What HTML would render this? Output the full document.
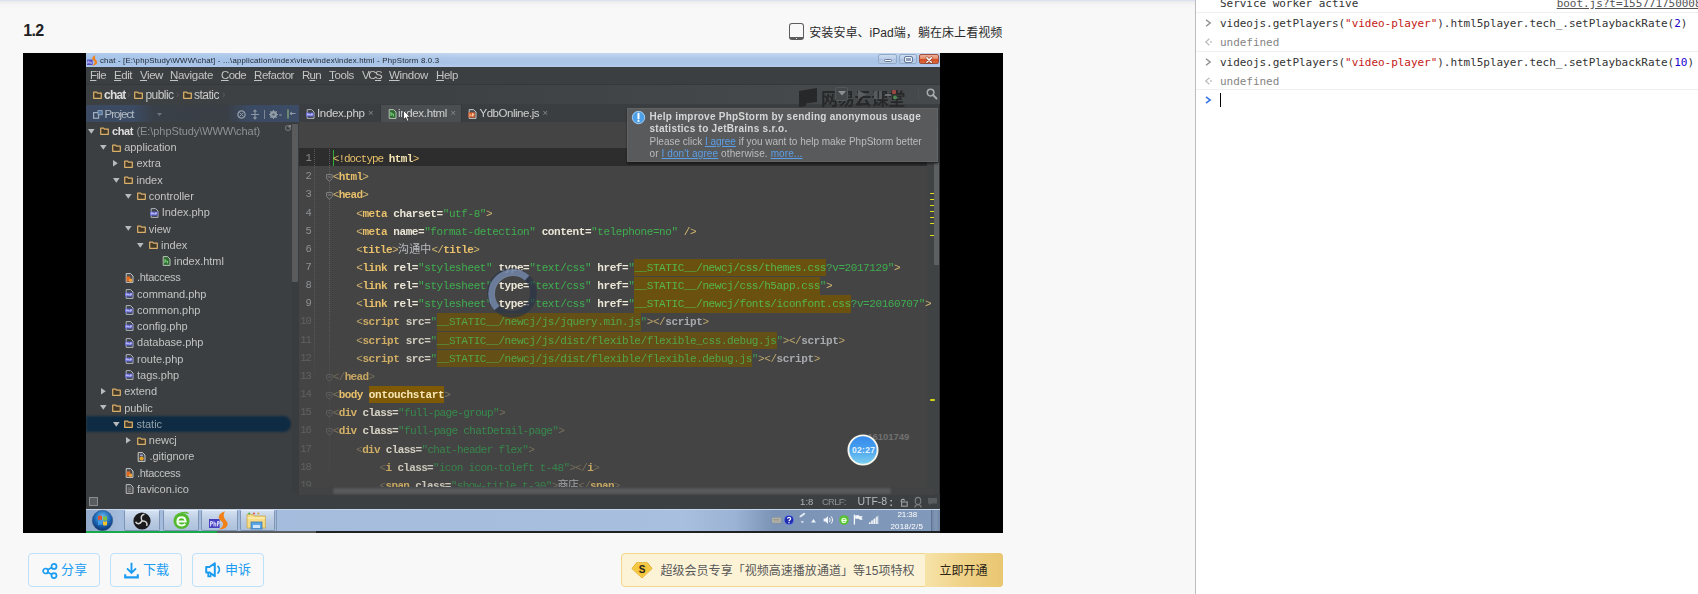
<!DOCTYPE html>
<html lang="zh-CN">
<head>
<meta charset="utf-8">
<title>1.2</title>
<style>
*{box-sizing:border-box;margin:0;padding:0}
html,body{width:1698px;height:594px;overflow:hidden}
body{background:#f8f8f8;position:relative;font-family:"Liberation Sans","Noto Sans CJK SC",sans-serif;color:#222}
.abs{position:absolute}
.t{position:absolute;white-space:pre;display:block}
svg{position:absolute;overflow:visible}
/* ---------- page (left) ---------- */
#page{position:absolute;left:0;top:0;width:1195px;height:594px;background:#f8f8f8;overflow:hidden}
#topline{position:absolute;left:0;top:0;width:1195px;height:8px;background:linear-gradient(#d3deed 0,#dfe6ef 0.9px,#ededee 1.6px,#f1f1f1 3px,#f5f5f5 5px,#f8f8f8 8px)}
#video{position:absolute;left:23px;top:53px;width:980px;height:480px;background:#000;overflow:hidden}
#ide{position:absolute;left:63px;top:0;width:854px;height:480px;background:#3c3f41;overflow:hidden}
#blur{position:absolute;left:0;top:0;width:854px;height:480px;filter:blur(0.45px)}
.btn{position:absolute;top:553px;height:34px;border:1px solid #b9dcf8;border-radius:4px;background:#f8f8f8}
/* ---------- devtools (right) ---------- */
#split{position:absolute;left:1195px;top:0;width:1px;height:594px;background:#bdbdbd}
#dev{position:absolute;left:1196px;top:0;width:502px;height:594px;background:#fff;overflow:hidden;font-family:"DejaVu Sans Mono","Liberation Mono",monospace;font-size:11px;letter-spacing:-0.04px;color:#333;white-space:pre}
#dev .hr{position:absolute;left:0;width:502px;height:1px;background:#efefef}
#dev .ln{position:absolute;left:24px;height:16px;line-height:16px}
#dev .s{color:#c41a16}
#dev .n{color:#1c00cf}
#dev .u{color:#858585}
</style>
</head>
<body>
<div id="page">
  <div id="topline"></div>
<span class="t " id="t79" style="left:23.3px;top:19px;height:24px;line-height:24px;font-size:16px;color:#222;font-family:'Liberation Sans','Noto Sans CJK SC',sans-serif;font-weight:bold;letter-spacing:-0.650px;">1.2</span>
<div class="abs" style="left:789px;top:23px;width:15px;height:17px;background:transparent;border:1.8px solid #5c5c5c;border-bottom-width:3.2px;border-radius:3px"></div>
<div class="abs" style="left:795.6px;top:37.5px;width:1.8px;height:1.8px;background:#fdfdfd;border-radius:1px"></div>
<span class="t " id="t80" style="left:809.3px;top:24px;height:18px;line-height:18px;font-size:12px;color:#2a2a2a;font-family:'Liberation Sans','Noto Sans CJK SC',sans-serif;letter-spacing:0.054px;">安装安卓、iPad端，躺在床上看视频</span>
<div class="abs" style="left:28px;top:553px;width:72px;height:34px;background:#f8f8f8;border:1px solid #bbe1fb;border-radius:4px"></div>
<div class="abs" style="left:110px;top:553px;width:72px;height:34px;background:#f8f8f8;border:1px solid #bbe1fb;border-radius:4px"></div>
<div class="abs" style="left:192px;top:553px;width:71.5px;height:34px;background:#f8f8f8;border:1px solid #bbe1fb;border-radius:4px"></div>
<svg style="left:41.5px;top:562.5px" width="16" height="16" viewBox="0 0 16 16"><g fill="none" stroke="#1b9cf2" stroke-width="1.7"><circle cx="3.6" cy="8" r="2.5"/><circle cx="12" cy="3.4" r="2.5"/><circle cx="12" cy="12.6" r="2.5"/><path d="M5.8 6.8L9.8 4.6M5.8 9.2L9.8 11.4"/></g></svg>
<span class="t " id="t81" style="left:61px;top:560.45px;height:19.5px;line-height:19.5px;font-size:13px;color:#1b9cf2;font-family:'Liberation Sans','Noto Sans CJK SC',sans-serif;letter-spacing:0.242px;">分享</span>
<svg style="left:124px;top:561.5px" width="15" height="17" viewBox="0 0 15 17"><g fill="none" stroke="#1b9cf2" stroke-width="1.9"><path d="M7.5 0.8V10.8M3 6.4L7.5 11L12 6.4"/><path d="M1.2 12.2V15.4H13.8V12.2" stroke-width="2.1"/></g></svg>
<span class="t " id="t82" style="left:143px;top:560.45px;height:19.5px;line-height:19.5px;font-size:13px;color:#1b9cf2;font-family:'Liberation Sans','Noto Sans CJK SC',sans-serif;letter-spacing:-0.008px;">下载</span>
<svg style="left:205px;top:562px" width="17" height="16" viewBox="0 0 17 16"><g fill="none" stroke="#1b9cf2" stroke-width="2" stroke-linejoin="round"><path d="M1.2 5H4.4L9.8 1.2V14.2L4.4 10.4H1.2Z"/><path d="M3.2 10.6V14.4H5.6V11.4" stroke-width="1.7"/><path d="M13 4.4A4.8 4.8 0 0 1 13 11" stroke-linecap="round" stroke-width="1.8"/></g></svg>
<span class="t " id="t83" style="left:225px;top:560.45px;height:19.5px;line-height:19.5px;font-size:13px;color:#1b9cf2;font-family:'Liberation Sans','Noto Sans CJK SC',sans-serif;letter-spacing:-0.008px;">申诉</span>
<div class="abs" style="left:621px;top:553px;width:382px;height:34px;background:#fcf3d7;border:1px solid #f2d689;border-radius:4px"></div>
<div class="abs" style="left:925px;top:553px;width:78px;height:34px;background:linear-gradient(90deg,#f6e3a8,#f0d38a 45%,#e9c670);border-radius:0 4px 4px 0"></div>
<svg style="left:631px;top:561.5px" width="22" height="17" viewBox="0 0 22 17"><path d="M5.6 0.8H16.4L21 6.6L11 16L1 6.6Z" fill="#f4c63c" stroke="#e2a91c" stroke-width="1"/><path d="M5.6 0.8H16.4L21 6.6L11 16L1 6.6Z" fill="none" stroke="#fbe08a" stroke-width=".5" transform="translate(1.1 1) scale(.9)"/></svg>
<span class="t " id="t84" style="left:638.7px;top:562px;height:15px;line-height:15px;font-size:10px;color:#2a2418;font-family:'Liberation Sans','Noto Sans CJK SC',sans-serif;font-weight:bold;letter-spacing:-0.072px;">S</span>
<span class="t " id="t85" style="left:660.5px;top:561.6px;height:18px;line-height:18px;font-size:12px;color:#585858;font-family:'Liberation Sans','Noto Sans CJK SC',sans-serif;letter-spacing:0.029px;">超级会员专享「视频高速播放通道」等15项特权</span>
<span class="t " id="t86" style="left:939.5px;top:561.6px;height:18px;line-height:18px;font-size:12px;color:#2b2414;font-family:'Liberation Sans','Noto Sans CJK SC',sans-serif;letter-spacing:-0.004px;">立即开通</span>
  <div id="video">
    <div id="ide"><div id="blur">
<div class="abs" style="left:0px;top:0px;width:854px;height:14px;background:linear-gradient(90deg,rgba(160,192,232,.55),rgba(185,208,234,0) 45%),linear-gradient(#c4d7f0,#adc7e9 40%,#a8c3e7 70%,#b4cbeb);"></div>
<div class="abs" style="left:0px;top:14px;width:854px;height:17px;background:#3c3f41;"></div>
<div class="abs" style="left:0px;top:31px;width:854px;height:20.5px;background:linear-gradient(90deg,#3d4042 0,#3e4143 40%,#46494b 85%);border-top:1px solid #35383a"></div>
<div class="abs" style="left:0px;top:52px;width:212.5px;height:17.2px;background:linear-gradient(90deg,#3b4a62 0,#3b4b64 22%,#3a4048 32%,#3a3f46 66%,#3b4a63 76%,#3c4c66 100%);"></div>
<div class="abs" style="left:0px;top:69.4px;width:206px;height:371.6px;background:#3c3f41;"></div>
<div class="abs" style="left:206px;top:69.4px;width:6.5px;height:371.6px;background:#3a3d3f;"></div>
<div class="abs" style="left:212.5px;top:51px;width:641.5px;height:18px;background:#3b3e40;"></div>
<div class="abs" style="left:212.5px;top:69px;width:641.5px;height:372px;background:#444444;"></div>
<div class="abs" style="left:212.5px;top:95.2px;width:628.5px;height:17.8px;background:#2d2d2d;"></div>
<div class="abs" style="left:841px;top:69px;width:12px;height:372px;background:#404344;"></div>
<div class="abs" style="left:853px;top:51px;width:1px;height:390px;background:#2f3133;"></div>
<div class="abs" style="left:0px;top:441px;width:854px;height:15px;background:#3c3f41;"></div>
<svg style="left:1px;top:1.5px" width="11" height="11" viewBox="0 0 11 11"><rect x="0" y="4.6" width="5.6" height="5.4" fill="#4d48c0"/><path d="M0.8 9V6.2h1.2v1.4H0.8M3 9V6.2M3 7.4h1.4V9" stroke="#dcdcff" stroke-width=".6" fill="none"/><path d="M8.6 0.2C4.6 1.6 4.4 4.2 6.6 5.6C8.4 6.8 8 9 5.2 10.6C9.6 10.6 11.4 7.8 9.4 5.6C7.8 3.8 7.4 2 8.6 0.2Z" fill="#f2811a"/></svg>
<span class="t " id="t0" style="left:14px;top:2.15px;height:11.7px;line-height:11.7px;font-size:7.8px;color:#1d232b;font-family:'Liberation Sans','Noto Sans CJK SC',sans-serif;letter-spacing:0.202px;">chat - [E:\phpStudy\WWW\chat] - ...\application\index\view\index\index.html - PhpStorm 8.0.3</span>
<div class="abs" style="left:792.2px;top:0.8px;width:19px;height:10.6px;background:linear-gradient(#cddcf1,#bacde8 48%,#abc1e0 52%,#b9cde8);border:1px solid #93a9c8;border-radius:2px"></div>
<div class="abs" style="left:812.8px;top:0.8px;width:18.6px;height:10.6px;background:linear-gradient(#cddcf1,#bacde8 48%,#abc1e0 52%,#b9cde8);border:1px solid #93a9c8;border-radius:2px"></div>
<div class="abs" style="left:833.1px;top:0.8px;width:19.7px;height:10.6px;background:linear-gradient(#eeb09a,#e58c6c 45%,#d44a20 52%,#dc6a3c);border:1px solid #a0503c;border-radius:2px"></div>
<div class="abs" style="left:798.2px;top:6.4px;width:7.8px;height:2.8px;background:#f4f7fb;border:0.7px solid #6a7c98;border-radius:1.4px"></div>
<div class="abs" style="left:819px;top:3.8px;width:6.8px;height:5.6px;background:#8d9fbd;border:1.3px solid #f2f5fa;outline:0.6px solid #66789a;border-radius:1px"></div>
<svg style="left:840px;top:3.6px" width="6.2" height="6.2" viewBox="0 0 6.2 6.2"><path d="M0.9 0.9L5.3 5.3M5.3 0.9L0.9 5.3" stroke="#6b2a1a" stroke-width="2.6" stroke-linecap="round"/><path d="M0.9 0.9L5.3 5.3M5.3 0.9L0.9 5.3" stroke="#fff" stroke-width="1.6" stroke-linecap="round"/></svg>
<span class="t " id="t1" style="left:4px;top:13.675px;height:17.25px;line-height:17.25px;font-size:11.5px;color:#c4c4c4;font-family:'Liberation Sans','Noto Sans CJK SC',sans-serif;letter-spacing:-0.637px;"><u>F</u>ile</span>
<span class="t " id="t2" style="left:28px;top:13.675px;height:17.25px;line-height:17.25px;font-size:11.5px;color:#c4c4c4;font-family:'Liberation Sans','Noto Sans CJK SC',sans-serif;letter-spacing:-0.457px;"><u>E</u>dit</span>
<span class="t " id="t3" style="left:54px;top:13.675px;height:17.25px;line-height:17.25px;font-size:11.5px;color:#c4c4c4;font-family:'Liberation Sans','Noto Sans CJK SC',sans-serif;letter-spacing:-0.434px;"><u>V</u>iew</span>
<span class="t " id="t4" style="left:84px;top:13.675px;height:17.25px;line-height:17.25px;font-size:11.5px;color:#c4c4c4;font-family:'Liberation Sans','Noto Sans CJK SC',sans-serif;letter-spacing:-0.301px;"><u>N</u>avigate</span>
<span class="t " id="t5" style="left:135px;top:13.675px;height:17.25px;line-height:17.25px;font-size:11.5px;color:#c4c4c4;font-family:'Liberation Sans','Noto Sans CJK SC',sans-serif;letter-spacing:-0.625px;"><u>C</u>ode</span>
<span class="t " id="t6" style="left:168px;top:13.675px;height:17.25px;line-height:17.25px;font-size:11.5px;color:#c4c4c4;font-family:'Liberation Sans','Noto Sans CJK SC',sans-serif;letter-spacing:-0.436px;"><u>R</u>efactor</span>
<span class="t " id="t7" style="left:216px;top:13.675px;height:17.25px;line-height:17.25px;font-size:11.5px;color:#c4c4c4;font-family:'Liberation Sans','Noto Sans CJK SC',sans-serif;letter-spacing:-0.708px;">R<u>u</u>n</span>
<span class="t " id="t8" style="left:243px;top:13.675px;height:17.25px;line-height:17.25px;font-size:11.5px;color:#c4c4c4;font-family:'Liberation Sans','Noto Sans CJK SC',sans-serif;letter-spacing:-0.372px;"><u>T</u>ools</span>
<span class="t " id="t9" style="left:276px;top:13.675px;height:17.25px;line-height:17.25px;font-size:11.5px;color:#c4c4c4;font-family:'Liberation Sans','Noto Sans CJK SC',sans-serif;letter-spacing:-1.500px;">VC<u>S</u></span>
<span class="t " id="t10" style="left:303px;top:13.675px;height:17.25px;line-height:17.25px;font-size:11.5px;color:#c4c4c4;font-family:'Liberation Sans','Noto Sans CJK SC',sans-serif;letter-spacing:-0.320px;"><u>W</u>indow</span>
<span class="t " id="t11" style="left:350px;top:13.675px;height:17.25px;line-height:17.25px;font-size:11.5px;color:#c4c4c4;font-family:'Liberation Sans','Noto Sans CJK SC',sans-serif;letter-spacing:-0.418px;"><u>H</u>elp</span>
<svg style="left:6.5px;top:38px" width="9" height="8" viewBox="0 0 9 8"><path d="M0.7 1.0H3.6L4.4 2.1H8.3V7.3H0.7Z" fill="#42392a" stroke="#d9b06a" stroke-width="1.25" stroke-linejoin="round"/></svg>
<span class="t " id="t12" style="left:18px;top:32.8px;height:18px;line-height:18px;font-size:12px;color:#dcdcdc;font-family:'Liberation Sans','Noto Sans CJK SC',sans-serif;font-weight:bold;letter-spacing:-0.797px;">chat</span>
<span class="t " id="t13" style="left:41px;top:34.3px;height:15px;line-height:15px;font-size:10px;color:#5a5d60;font-family:'Liberation Sans','Noto Sans CJK SC',sans-serif;letter-spacing:0.656px;">›</span>
<svg style="left:48px;top:38px" width="9" height="8" viewBox="0 0 9 8"><path d="M0.7 1.0H3.6L4.4 2.1H8.3V7.3H0.7Z" fill="#42392a" stroke="#d9b06a" stroke-width="1.25" stroke-linejoin="round"/></svg>
<span class="t " id="t14" style="left:59.5px;top:32.8px;height:18px;line-height:18px;font-size:12px;color:#c8c8c8;font-family:'Liberation Sans','Noto Sans CJK SC',sans-serif;letter-spacing:-0.560px;">public</span>
<span class="t " id="t15" style="left:90px;top:34.3px;height:15px;line-height:15px;font-size:10px;color:#5a5d60;font-family:'Liberation Sans','Noto Sans CJK SC',sans-serif;letter-spacing:0.656px;">›</span>
<svg style="left:97px;top:38px" width="9" height="8" viewBox="0 0 9 8"><path d="M0.7 1.0H3.6L4.4 2.1H8.3V7.3H0.7Z" fill="#42392a" stroke="#d9b06a" stroke-width="1.25" stroke-linejoin="round"/></svg>
<span class="t " id="t16" style="left:108px;top:32.8px;height:18px;line-height:18px;font-size:12px;color:#c8c8c8;font-family:'Liberation Sans','Noto Sans CJK SC',sans-serif;letter-spacing:-0.503px;">static</span>
<span class="t " id="t17" style="left:136px;top:34.3px;height:15px;line-height:15px;font-size:10px;color:#5a5d60;font-family:'Liberation Sans','Noto Sans CJK SC',sans-serif;letter-spacing:0.656px;">›</span>
<svg style="left:711px;top:35px" width="22" height="20" viewBox="0 0 22 20"><path d="M2 3L20 0V14L9 15.5V18L2 19Z" fill="#262829"/></svg>
<span class="t " id="t18" style="left:735px;top:33.55px;height:25.5px;line-height:25.5px;font-size:17px;color:#262829;font-family:'Liberation Sans','Noto Sans CJK SC',sans-serif;font-weight:bold;letter-spacing:-0.200px;">网易云课堂</span>
<svg style="left:840px;top:35px" width="12" height="12" viewBox="0 0 12 12"><circle cx="4.6" cy="4.6" r="3.3" fill="none" stroke="#a9abad" stroke-width="1.5"/><path d="M7 7L10.5 10.5" stroke="#a9abad" stroke-width="1.8" stroke-linecap="round"/></svg>
<div class="abs" style="left:831.5px;top:34px;width:1px;height:14px;background:#4b4e50;"></div>
<div class="abs" style="left:749px;top:34px;width:13px;height:14px;background:#45484a;border:1px solid #55585a;border-radius:2px"></div>
<svg style="left:752px;top:38px" width="8" height="5" viewBox="0 0 8 5"><path d="M0 0H8L4 4.5Z" fill="#8d9092"/></svg>
<svg style="left:772px;top:36px" width="40" height="12" viewBox="0 0 40 12"><path d="M0 1L8 5.5L0 10Z" fill="#5b5e60"/><path d="M16 2h3v8h-3zM21 2h3v8h-3z" fill="#585b5d"/><circle cx="36" cy="3" r="2.2" fill="#9a4a42"/><circle cx="37" cy="8.5" r="2" fill="#4f8a55"/><path d="M27 6h6" stroke="#7d8082" stroke-width="1.5"/></svg>
<svg style="left:7px;top:56.5px" width="10" height="9" viewBox="0 0 10 9"><rect x="0.6" y="2.6" width="5" height="5.6" fill="none" stroke="#9fb0c4" stroke-width="1.2"/><rect x="5" y="0.6" width="4.2" height="4.2" fill="#51749c" stroke="#9fb0c4" stroke-width="0.8"/></svg>
<span class="t " id="t19" style="left:18.5px;top:52.675px;height:17.25px;line-height:17.25px;font-size:11.5px;color:#b4bcc6;font-family:'Liberation Sans','Noto Sans CJK SC',sans-serif;letter-spacing:-0.971px;">Project</span>
<svg style="left:71px;top:59.5px" width="6" height="4" viewBox="0 0 6 4"><path d="M0 0H5L2.5 3Z" fill="#6b7684"/></svg>
<svg style="left:150.5px;top:56.5px" width="9" height="9" viewBox="0 0 9 9"><circle cx="4.5" cy="4.5" r="3.6" fill="none" stroke="#929ca8" stroke-width="1.3"/><path d="M2.5 2.5l4 4M6.5 2.5l-4 4" stroke="#929ca8" stroke-width="1"/></svg>
<svg style="left:164.5px;top:56.5px" width="8" height="9" viewBox="0 0 8 9"><path d="M4 0V9M0 4.5H8M2.5 1.6L4 0L5.5 1.6M2.5 7.4L4 9L5.5 7.4" fill="none" stroke="#8e98a4" stroke-width="1.1"/></svg>
<div class="abs" style="left:177.5px;top:56.5px;width:1px;height:9px;background:#7d8793;"></div>
<svg style="left:182.5px;top:56.5px" width="13" height="9" viewBox="0 0 13 9"><circle cx="4.5" cy="4.5" r="2.5" fill="none" stroke="#929ca8" stroke-width="2"/><path d="M4.5 0v9M0 4.5h9M1.3 1.3l6.4 6.4M7.7 1.3L1.3 7.7" stroke="#929ca8" stroke-width="1.1"/><circle cx="4.5" cy="4.5" r="1.1" fill="#3b4b64"/><path d="M10.3 5h2.4" stroke="#929ca8" stroke-width="1.1"/></svg>
<svg style="left:200.5px;top:56px" width="9" height="10" viewBox="0 0 9 10"><path d="M1 0.5V9.5" stroke="#86a878" stroke-width="1.3"/><path d="M3 4.5H8.5M3 4.5L5 3M3 4.5L5 6" stroke="#929ca8" stroke-width="1" fill="none"/></svg>
<div class="abs" style="left:0px;top:363px;width:205px;height:15.5px;background:#0e2b43;border-radius:0 8px 8px 0;filter:blur(0.9px)"></div>
<svg style="left:2px;top:75.8px" width="7" height="5" viewBox="0 0 7 5"><path d="M0 0H6.6L3.3 4.8Z" fill="#b8babc"/></svg>
<svg style="left:13.8px;top:74.4px" width="9" height="8" viewBox="0 0 9 8"><path d="M0.7 1.0H3.6L4.4 2.1H8.3V7.3H0.7Z" fill="#42392a" stroke="#d9b06a" stroke-width="1.25" stroke-linejoin="round"/></svg>
<span class="t " id="t20" style="left:25.9px;top:69.95px;height:16.5px;line-height:16.5px;font-size:11px;color:#dedede;font-family:'Liberation Sans','Noto Sans CJK SC',sans-serif;font-weight:bold;letter-spacing:-0.331px;">chat</span>
<span class="t " id="t21" style="left:50.5px;top:69.95px;height:16.5px;line-height:16.5px;font-size:11px;color:#8f9193;font-family:'Liberation Sans','Noto Sans CJK SC',sans-serif;letter-spacing:-0.073px;">(E:\phpStudy\WWW\chat)</span>
<svg style="left:14.3px;top:92.07px" width="7" height="5" viewBox="0 0 7 5"><path d="M0 0H6.6L3.3 4.8Z" fill="#b8babc"/></svg>
<svg style="left:26.1px;top:90.67px" width="9" height="8" viewBox="0 0 9 8"><path d="M0.7 1.0H3.6L4.4 2.1H8.3V7.3H0.7Z" fill="#42392a" stroke="#d9b06a" stroke-width="1.25" stroke-linejoin="round"/></svg>
<span class="t " id="t22" style="left:38.2px;top:86.22px;height:16.5px;line-height:16.5px;font-size:11px;color:#c3c3c3;font-family:'Liberation Sans','Noto Sans CJK SC',sans-serif;letter-spacing:-0.024px;">application</span>
<svg style="left:27.4px;top:107.44px" width="5" height="7" viewBox="0 0 5 7"><path d="M0 0V6.6L4.8 3.3Z" fill="#b8babc"/></svg>
<svg style="left:38.4px;top:106.94px" width="9" height="8" viewBox="0 0 9 8"><path d="M0.7 1.0H3.6L4.4 2.1H8.3V7.3H0.7Z" fill="#42392a" stroke="#d9b06a" stroke-width="1.25" stroke-linejoin="round"/></svg>
<span class="t " id="t23" style="left:50.5px;top:102.49px;height:16.5px;line-height:16.5px;font-size:11px;color:#c3c3c3;font-family:'Liberation Sans','Noto Sans CJK SC',sans-serif;letter-spacing:-0.028px;">extra</span>
<svg style="left:26.6px;top:124.61px" width="7" height="5" viewBox="0 0 7 5"><path d="M0 0H6.6L3.3 4.8Z" fill="#b8babc"/></svg>
<svg style="left:38.4px;top:123.21px" width="9" height="8" viewBox="0 0 9 8"><path d="M0.7 1.0H3.6L4.4 2.1H8.3V7.3H0.7Z" fill="#42392a" stroke="#d9b06a" stroke-width="1.25" stroke-linejoin="round"/></svg>
<span class="t " id="t24" style="left:50.5px;top:118.76px;height:16.5px;line-height:16.5px;font-size:11px;color:#c3c3c3;font-family:'Liberation Sans','Noto Sans CJK SC',sans-serif;letter-spacing:-0.027px;">index</span>
<svg style="left:38.9px;top:140.88px" width="7" height="5" viewBox="0 0 7 5"><path d="M0 0H6.6L3.3 4.8Z" fill="#b8babc"/></svg>
<svg style="left:50.7px;top:139.48px" width="9" height="8" viewBox="0 0 9 8"><path d="M0.7 1.0H3.6L4.4 2.1H8.3V7.3H0.7Z" fill="#42392a" stroke="#d9b06a" stroke-width="1.25" stroke-linejoin="round"/></svg>
<span class="t " id="t25" style="left:62.8px;top:135.03px;height:16.5px;line-height:16.5px;font-size:11px;color:#c3c3c3;font-family:'Liberation Sans','Noto Sans CJK SC',sans-serif;letter-spacing:-0.024px;">controller</span>
<svg style="left:63.6px;top:154.55px" width="9" height="10" viewBox="0 0 9 10"><path d="M1.2 0.6H5.6L8 3V9.4H1.2Z" fill="#3f4345" stroke="#aeb4bd" stroke-width="1"/><rect x="0" y="3.6" width="7.6" height="4" fill="#5b5fd0"/><path d="M1.2 6.6V4.6M3.2 4.6v2M5.4 4.6v2M1.2 4.8h1.2v1H1.2M5.4 4.8h1.2v1H5.4M3.2 5.6h1.2v1" stroke="#e8e8ff" stroke-width="0.6" fill="none"/></svg>
<span class="t " id="t26" style="left:75.7px;top:151.3px;height:16.5px;line-height:16.5px;font-size:11px;color:#c3c3c3;font-family:'Liberation Sans','Noto Sans CJK SC',sans-serif;letter-spacing:-0.028px;">Index.php</span>
<svg style="left:38.9px;top:173.42px" width="7" height="5" viewBox="0 0 7 5"><path d="M0 0H6.6L3.3 4.8Z" fill="#b8babc"/></svg>
<svg style="left:50.7px;top:172.02px" width="9" height="8" viewBox="0 0 9 8"><path d="M0.7 1.0H3.6L4.4 2.1H8.3V7.3H0.7Z" fill="#42392a" stroke="#d9b06a" stroke-width="1.25" stroke-linejoin="round"/></svg>
<span class="t " id="t27" style="left:62.8px;top:167.57px;height:16.5px;line-height:16.5px;font-size:11px;color:#c3c3c3;font-family:'Liberation Sans','Noto Sans CJK SC',sans-serif;letter-spacing:-0.030px;">view</span>
<svg style="left:51.2px;top:189.69px" width="7" height="5" viewBox="0 0 7 5"><path d="M0 0H6.6L3.3 4.8Z" fill="#b8babc"/></svg>
<svg style="left:63px;top:188.29px" width="9" height="8" viewBox="0 0 9 8"><path d="M0.7 1.0H3.6L4.4 2.1H8.3V7.3H0.7Z" fill="#42392a" stroke="#d9b06a" stroke-width="1.25" stroke-linejoin="round"/></svg>
<span class="t " id="t28" style="left:75.1px;top:183.84px;height:16.5px;line-height:16.5px;font-size:11px;color:#c3c3c3;font-family:'Liberation Sans','Noto Sans CJK SC',sans-serif;letter-spacing:-0.027px;">index</span>
<svg style="left:75.9px;top:203.36px" width="9" height="10" viewBox="0 0 9 10"><path d="M1.2 0.6H5.6L8 3V9.4H1.2Z" fill="#2f6a32" stroke="#b9c2b9" stroke-width="1"/><path d="M3 3v4M3 5h2.4M5.4 5v2.4" stroke="#7fd77f" stroke-width="1" fill="none"/></svg>
<span class="t " id="t29" style="left:88px;top:200.11px;height:16.5px;line-height:16.5px;font-size:11px;color:#c3c3c3;font-family:'Liberation Sans','Noto Sans CJK SC',sans-serif;letter-spacing:-0.026px;">index.html</span>
<svg style="left:39px;top:219.63px" width="9" height="10" viewBox="0 0 9 10"><path d="M1.2 0.6H5.6L8 3V9.4H1.2Z" fill="#4a4d50" stroke="#c8c8c8" stroke-width="1"/><rect x="1.6" y="3.4" width="3.6" height="5" fill="#e0691e"/><circle cx="5.6" cy="7.3" r="1.7" fill="#f2a23a"/></svg>
<span class="t " id="t30" style="left:51.1px;top:216.38px;height:16.5px;line-height:16.5px;font-size:11px;color:#c3c3c3;font-family:'Liberation Sans','Noto Sans CJK SC',sans-serif;letter-spacing:-0.362px;">.htaccess</span>
<svg style="left:39px;top:235.9px" width="9" height="10" viewBox="0 0 9 10"><path d="M1.2 0.6H5.6L8 3V9.4H1.2Z" fill="#3f4345" stroke="#aeb4bd" stroke-width="1"/><rect x="0" y="3.6" width="7.6" height="4" fill="#5b5fd0"/><path d="M1.2 6.6V4.6M3.2 4.6v2M5.4 4.6v2M1.2 4.8h1.2v1H1.2M5.4 4.8h1.2v1H5.4M3.2 5.6h1.2v1" stroke="#e8e8ff" stroke-width="0.6" fill="none"/></svg>
<span class="t " id="t31" style="left:51.1px;top:232.65px;height:16.5px;line-height:16.5px;font-size:11px;color:#c3c3c3;font-family:'Liberation Sans','Noto Sans CJK SC',sans-serif;letter-spacing:-0.033px;">command.php</span>
<svg style="left:39px;top:252.17px" width="9" height="10" viewBox="0 0 9 10"><path d="M1.2 0.6H5.6L8 3V9.4H1.2Z" fill="#3f4345" stroke="#aeb4bd" stroke-width="1"/><rect x="0" y="3.6" width="7.6" height="4" fill="#5b5fd0"/><path d="M1.2 6.6V4.6M3.2 4.6v2M5.4 4.6v2M1.2 4.8h1.2v1H1.2M5.4 4.8h1.2v1H5.4M3.2 5.6h1.2v1" stroke="#e8e8ff" stroke-width="0.6" fill="none"/></svg>
<span class="t " id="t32" style="left:51.1px;top:248.92px;height:16.5px;line-height:16.5px;font-size:11px;color:#c3c3c3;font-family:'Liberation Sans','Noto Sans CJK SC',sans-serif;letter-spacing:-0.033px;">common.php</span>
<svg style="left:39px;top:268.44px" width="9" height="10" viewBox="0 0 9 10"><path d="M1.2 0.6H5.6L8 3V9.4H1.2Z" fill="#3f4345" stroke="#aeb4bd" stroke-width="1"/><rect x="0" y="3.6" width="7.6" height="4" fill="#5b5fd0"/><path d="M1.2 6.6V4.6M3.2 4.6v2M5.4 4.6v2M1.2 4.8h1.2v1H1.2M5.4 4.8h1.2v1H5.4M3.2 5.6h1.2v1" stroke="#e8e8ff" stroke-width="0.6" fill="none"/></svg>
<span class="t " id="t33" style="left:51.1px;top:265.19px;height:16.5px;line-height:16.5px;font-size:11px;color:#c3c3c3;font-family:'Liberation Sans','Noto Sans CJK SC',sans-serif;letter-spacing:-0.026px;">config.php</span>
<svg style="left:39px;top:284.71px" width="9" height="10" viewBox="0 0 9 10"><path d="M1.2 0.6H5.6L8 3V9.4H1.2Z" fill="#3f4345" stroke="#aeb4bd" stroke-width="1"/><rect x="0" y="3.6" width="7.6" height="4" fill="#5b5fd0"/><path d="M1.2 6.6V4.6M3.2 4.6v2M5.4 4.6v2M1.2 4.8h1.2v1H1.2M5.4 4.8h1.2v1H5.4M3.2 5.6h1.2v1" stroke="#e8e8ff" stroke-width="0.6" fill="none"/></svg>
<span class="t " id="t34" style="left:51.1px;top:281.46px;height:16.5px;line-height:16.5px;font-size:11px;color:#c3c3c3;font-family:'Liberation Sans','Noto Sans CJK SC',sans-serif;letter-spacing:-0.028px;">database.php</span>
<svg style="left:39px;top:300.98px" width="9" height="10" viewBox="0 0 9 10"><path d="M1.2 0.6H5.6L8 3V9.4H1.2Z" fill="#3f4345" stroke="#aeb4bd" stroke-width="1"/><rect x="0" y="3.6" width="7.6" height="4" fill="#5b5fd0"/><path d="M1.2 6.6V4.6M3.2 4.6v2M5.4 4.6v2M1.2 4.8h1.2v1H1.2M5.4 4.8h1.2v1H5.4M3.2 5.6h1.2v1" stroke="#e8e8ff" stroke-width="0.6" fill="none"/></svg>
<span class="t " id="t35" style="left:51.1px;top:297.73px;height:16.5px;line-height:16.5px;font-size:11px;color:#c3c3c3;font-family:'Liberation Sans','Noto Sans CJK SC',sans-serif;letter-spacing:-0.027px;">route.php</span>
<svg style="left:39px;top:317.25px" width="9" height="10" viewBox="0 0 9 10"><path d="M1.2 0.6H5.6L8 3V9.4H1.2Z" fill="#3f4345" stroke="#aeb4bd" stroke-width="1"/><rect x="0" y="3.6" width="7.6" height="4" fill="#5b5fd0"/><path d="M1.2 6.6V4.6M3.2 4.6v2M5.4 4.6v2M1.2 4.8h1.2v1H1.2M5.4 4.8h1.2v1H5.4M3.2 5.6h1.2v1" stroke="#e8e8ff" stroke-width="0.6" fill="none"/></svg>
<span class="t " id="t36" style="left:51.1px;top:314px;height:16.5px;line-height:16.5px;font-size:11px;color:#c3c3c3;font-family:'Liberation Sans','Noto Sans CJK SC',sans-serif;letter-spacing:-0.027px;">tags.php</span>
<svg style="left:15.1px;top:335.22px" width="5" height="7" viewBox="0 0 5 7"><path d="M0 0V6.6L4.8 3.3Z" fill="#b8babc"/></svg>
<svg style="left:26.1px;top:334.72px" width="9" height="8" viewBox="0 0 9 8"><path d="M0.7 1.0H3.6L4.4 2.1H8.3V7.3H0.7Z" fill="#42392a" stroke="#d9b06a" stroke-width="1.25" stroke-linejoin="round"/></svg>
<span class="t " id="t37" style="left:38.2px;top:330.27px;height:16.5px;line-height:16.5px;font-size:11px;color:#c3c3c3;font-family:'Liberation Sans','Noto Sans CJK SC',sans-serif;letter-spacing:-0.029px;">extend</span>
<svg style="left:14.3px;top:352.39px" width="7" height="5" viewBox="0 0 7 5"><path d="M0 0H6.6L3.3 4.8Z" fill="#b8babc"/></svg>
<svg style="left:26.1px;top:350.99px" width="9" height="8" viewBox="0 0 9 8"><path d="M0.7 1.0H3.6L4.4 2.1H8.3V7.3H0.7Z" fill="#42392a" stroke="#d9b06a" stroke-width="1.25" stroke-linejoin="round"/></svg>
<span class="t " id="t38" style="left:38.2px;top:346.54px;height:16.5px;line-height:16.5px;font-size:11px;color:#c3c3c3;font-family:'Liberation Sans','Noto Sans CJK SC',sans-serif;letter-spacing:-0.026px;">public</span>
<svg style="left:26.6px;top:368.66px" width="7" height="5" viewBox="0 0 7 5"><path d="M0 0H6.6L3.3 4.8Z" fill="#b8babc"/></svg>
<svg style="left:38.4px;top:367.26px" width="9" height="8" viewBox="0 0 9 8"><path d="M0.7 1.0H3.6L4.4 2.1H8.3V7.3H0.7Z" fill="#42392a" stroke="#d9b06a" stroke-width="1.25" stroke-linejoin="round"/></svg>
<span class="t " id="t39" style="left:50.5px;top:362.81px;height:16.5px;line-height:16.5px;font-size:11px;color:#93a0aa;font-family:'Liberation Sans','Noto Sans CJK SC',sans-serif;letter-spacing:-0.024px;filter:blur(0.75px);">static</span>
<svg style="left:39.7px;top:384.03px" width="5" height="7" viewBox="0 0 5 7"><path d="M0 0V6.6L4.8 3.3Z" fill="#b8babc"/></svg>
<svg style="left:50.7px;top:383.53px" width="9" height="8" viewBox="0 0 9 8"><path d="M0.7 1.0H3.6L4.4 2.1H8.3V7.3H0.7Z" fill="#42392a" stroke="#d9b06a" stroke-width="1.25" stroke-linejoin="round"/></svg>
<span class="t " id="t40" style="left:62.8px;top:379.08px;height:16.5px;line-height:16.5px;font-size:11px;color:#c3c3c3;font-family:'Liberation Sans','Noto Sans CJK SC',sans-serif;letter-spacing:-0.029px;filter:blur(0.75px);">newcj</span>
<svg style="left:51.3px;top:398.6px" width="9" height="10" viewBox="0 0 9 10"><path d="M1.2 0.6H5.6L8 3V9.4H1.2Z" fill="#4a4d50" stroke="#c8c8c8" stroke-width="1"/><circle cx="4.6" cy="6.4" r="2" fill="#e8a020"/><path d="M3 3.2h3" stroke="#b5c6ff" stroke-width="1"/></svg>
<span class="t " id="t41" style="left:63.4px;top:395.35px;height:16.5px;line-height:16.5px;font-size:11px;color:#c3c3c3;font-family:'Liberation Sans','Noto Sans CJK SC',sans-serif;letter-spacing:-0.024px;filter:blur(0.75px);">.gitignore</span>
<svg style="left:39px;top:414.87px" width="9" height="10" viewBox="0 0 9 10"><path d="M1.2 0.6H5.6L8 3V9.4H1.2Z" fill="#4a4d50" stroke="#c8c8c8" stroke-width="1"/><rect x="1.6" y="3.4" width="3.6" height="5" fill="#e0691e"/><circle cx="5.6" cy="7.3" r="1.7" fill="#f2a23a"/></svg>
<span class="t " id="t42" style="left:51.1px;top:411.62px;height:16.5px;line-height:16.5px;font-size:11px;color:#c3c3c3;font-family:'Liberation Sans','Noto Sans CJK SC',sans-serif;letter-spacing:-0.362px;filter:blur(0.75px);">.htaccess</span>
<svg style="left:39px;top:431.14px" width="9" height="10" viewBox="0 0 9 10"><path d="M1.2 0.6H5.6L8 3V9.4H1.2Z" fill="#4a4d50" stroke="#bcbcbc" stroke-width="1"/><path d="M2.8 4h3.4M2.8 5.7h3.4M2.8 7.4h3.4" stroke="#8e8e8e" stroke-width="0.8"/></svg>
<span class="t " id="t43" style="left:51.1px;top:427.89px;height:16.5px;line-height:16.5px;font-size:11px;color:#c3c3c3;font-family:'Liberation Sans','Noto Sans CJK SC',sans-serif;letter-spacing:-0.025px;filter:blur(0.75px);">favicon.ico</span>
<div class="abs" style="left:206px;top:70.5px;width:6px;height:158.5px;background:#595b5d;border-radius:1px"></div>
<svg style="left:198.5px;top:71.5px" width="6" height="6" viewBox="0 0 6 6"><path d="M3 0.5A2.5 2.5 0 1 0 5.5 3" fill="none" stroke="#6f7274" stroke-width="1.2"/><rect x="3.4" y="0" width="2.6" height="2.6" fill="#85888a"/></svg>
<div class="abs" style="left:3px;top:444px;width:8.5px;height:8.5px;background:#595c5e;border:1.2px solid #8a8d8f"></div>
<div class="abs" style="left:293.5px;top:51.5px;width:82px;height:17.5px;background:#4b4e50;border-left:1px solid #353739;border-right:1px solid #353739"></div>
<svg style="left:220px;top:55.5px" width="9" height="10" viewBox="0 0 9 10"><path d="M1.2 0.6H5.6L8 3V9.4H1.2Z" fill="#3f4345" stroke="#aeb4bd" stroke-width="1"/><rect x="0" y="3.6" width="7.6" height="4" fill="#5b5fd0"/><path d="M1.2 6.6V4.6M3.2 4.6v2M5.4 4.6v2M1.2 4.8h1.2v1H1.2M5.4 4.8h1.2v1H5.4M3.2 5.6h1.2v1" stroke="#e8e8ff" stroke-width="0.6" fill="none"/></svg>
<span class="t " id="t44" style="left:231px;top:51.775px;height:17.25px;line-height:17.25px;font-size:11.5px;color:#d0d0d0;font-family:'Liberation Sans','Noto Sans CJK SC',sans-serif;letter-spacing:-0.335px;">Index.php</span>
<span class="t " id="t45" style="left:282px;top:53.475px;height:14.25px;line-height:14.25px;font-size:9.5px;color:#888b8d;font-family:'Liberation Sans','Noto Sans CJK SC',sans-serif;letter-spacing:-0.562px;">×</span>
<svg style="left:302px;top:55.5px" width="9" height="10" viewBox="0 0 9 10"><path d="M1.2 0.6H5.6L8 3V9.4H1.2Z" fill="#2f6a32" stroke="#b9c2b9" stroke-width="1"/><path d="M3 3v4M3 5h2.4M5.4 5v2.4" stroke="#7fd77f" stroke-width="1" fill="none"/></svg>
<span class="t " id="t46" style="left:312px;top:51.775px;height:17.25px;line-height:17.25px;font-size:11.5px;color:#d0d0d0;font-family:'Liberation Sans','Noto Sans CJK SC',sans-serif;letter-spacing:-0.342px;">index.html</span>
<span class="t " id="t47" style="left:364.5px;top:53.475px;height:14.25px;line-height:14.25px;font-size:9.5px;color:#888b8d;font-family:'Liberation Sans','Noto Sans CJK SC',sans-serif;letter-spacing:-0.562px;">×</span>
<svg style="left:381.5px;top:55.5px" width="9" height="10" viewBox="0 0 9 10"><path d="M1.2 0.6H5.6L8 3V9.4H1.2Z" fill="#4a4d50" stroke="#c8c8c8" stroke-width="1"/><rect x="0.4" y="3.4" width="6.4" height="5" fill="#d8622a"/><path d="M2 5v2.4M4 4.8h1.4v1H4v1h1.4" stroke="#ffe" stroke-width=".7" fill="none"/></svg>
<span class="t " id="t48" style="left:393.5px;top:51.775px;height:17.25px;line-height:17.25px;font-size:11.5px;color:#d0d0d0;font-family:'Liberation Sans','Noto Sans CJK SC',sans-serif;letter-spacing:-0.477px;">YdbOnline.js</span>
<span class="t " id="t49" style="left:456.5px;top:53.475px;height:14.25px;line-height:14.25px;font-size:9.5px;color:#888b8d;font-family:'Liberation Sans','Noto Sans CJK SC',sans-serif;letter-spacing:-0.562px;">×</span>
<svg style="left:316.5px;top:56.5px" width="8" height="12" viewBox="0 0 8 12"><path d="M0.5 0.5V9.6L2.7 7.6L4.3 11.2L5.9 10.5L4.3 7H7.2Z" fill="#fff" stroke="#222" stroke-width="0.7"/></svg>
<span class="t " id="t50" style="left:219.5px;top:98.125px;height:15.75px;line-height:15.75px;font-size:10.5px;color:#8f9193;font-family:'Liberation Mono','Noto Sans CJK SC',monospace;letter-spacing:-1.312px;opacity:1;">1</span>
<span class="t " id="t51" style="left:219.5px;top:116.275px;height:15.75px;line-height:15.75px;font-size:10.5px;color:#8f9193;font-family:'Liberation Mono','Noto Sans CJK SC',monospace;letter-spacing:-1.312px;opacity:1;">2</span>
<span class="t " id="t52" style="left:219.5px;top:134.425px;height:15.75px;line-height:15.75px;font-size:10.5px;color:#8f9193;font-family:'Liberation Mono','Noto Sans CJK SC',monospace;letter-spacing:-1.312px;opacity:1;">3</span>
<span class="t " id="t53" style="left:219.5px;top:152.575px;height:15.75px;line-height:15.75px;font-size:10.5px;color:#8f9193;font-family:'Liberation Mono','Noto Sans CJK SC',monospace;letter-spacing:-1.312px;opacity:1;">4</span>
<span class="t " id="t54" style="left:219.5px;top:170.725px;height:15.75px;line-height:15.75px;font-size:10.5px;color:#8f9193;font-family:'Liberation Mono','Noto Sans CJK SC',monospace;letter-spacing:-1.312px;opacity:1;">5</span>
<span class="t " id="t55" style="left:219.5px;top:188.875px;height:15.75px;line-height:15.75px;font-size:10.5px;color:#8f9193;font-family:'Liberation Mono','Noto Sans CJK SC',monospace;letter-spacing:-1.312px;opacity:1;">6</span>
<span class="t " id="t56" style="left:219.5px;top:207.025px;height:15.75px;line-height:15.75px;font-size:10.5px;color:#8f9193;font-family:'Liberation Mono','Noto Sans CJK SC',monospace;letter-spacing:-1.312px;opacity:1;">7</span>
<span class="t " id="t57" style="left:219.5px;top:225.175px;height:15.75px;line-height:15.75px;font-size:10.5px;color:#8f9193;font-family:'Liberation Mono','Noto Sans CJK SC',monospace;letter-spacing:-1.312px;opacity:1;">8</span>
<span class="t " id="t58" style="left:219.5px;top:243.325px;height:15.75px;line-height:15.75px;font-size:10.5px;color:#8f9193;font-family:'Liberation Mono','Noto Sans CJK SC',monospace;letter-spacing:-1.312px;opacity:1;">9</span>
<span class="t " id="t59" style="left:214.3px;top:261.475px;height:15.75px;line-height:15.75px;font-size:10.5px;color:#8f9193;font-family:'Liberation Mono','Noto Sans CJK SC',monospace;letter-spacing:-1.205px;opacity:0.36;">10</span>
<span class="t " id="t60" style="left:214.3px;top:279.625px;height:15.75px;line-height:15.75px;font-size:10.5px;color:#8f9193;font-family:'Liberation Mono','Noto Sans CJK SC',monospace;letter-spacing:-1.205px;opacity:0.36;">11</span>
<span class="t " id="t61" style="left:214.3px;top:297.775px;height:15.75px;line-height:15.75px;font-size:10.5px;color:#8f9193;font-family:'Liberation Mono','Noto Sans CJK SC',monospace;letter-spacing:-1.205px;opacity:0.36;">12</span>
<span class="t " id="t62" style="left:214.3px;top:315.925px;height:15.75px;line-height:15.75px;font-size:10.5px;color:#8f9193;font-family:'Liberation Mono','Noto Sans CJK SC',monospace;letter-spacing:-1.205px;opacity:0.36;">13</span>
<span class="t " id="t63" style="left:214.3px;top:334.075px;height:15.75px;line-height:15.75px;font-size:10.5px;color:#8f9193;font-family:'Liberation Mono','Noto Sans CJK SC',monospace;letter-spacing:-1.205px;opacity:0.36;">14</span>
<span class="t " id="t64" style="left:214.3px;top:352.225px;height:15.75px;line-height:15.75px;font-size:10.5px;color:#8f9193;font-family:'Liberation Mono','Noto Sans CJK SC',monospace;letter-spacing:-1.205px;opacity:0.36;">15</span>
<span class="t " id="t65" style="left:214.3px;top:370.375px;height:15.75px;line-height:15.75px;font-size:10.5px;color:#8f9193;font-family:'Liberation Mono','Noto Sans CJK SC',monospace;letter-spacing:-1.205px;opacity:0.36;">16</span>
<span class="t " id="t66" style="left:214.3px;top:388.525px;height:15.75px;line-height:15.75px;font-size:10.5px;color:#8f9193;font-family:'Liberation Mono','Noto Sans CJK SC',monospace;letter-spacing:-1.205px;opacity:0.36;">17</span>
<span class="t " id="t67" style="left:214.3px;top:406.675px;height:15.75px;line-height:15.75px;font-size:10.5px;color:#8f9193;font-family:'Liberation Mono','Noto Sans CJK SC',monospace;letter-spacing:-1.205px;opacity:0.36;">18</span>
<span class="t " id="t68" style="left:214.3px;top:424.825px;height:15.75px;line-height:15.75px;font-size:10.5px;color:#8f9193;font-family:'Liberation Mono','Noto Sans CJK SC',monospace;letter-spacing:-1.205px;opacity:0.36;">19</span>
<div class="abs" style="left:227.5px;top:96px;width:1px;height:338px;background:repeating-linear-gradient(#5a5a5a 0 1px,transparent 1px 2px);-webkit-mask-image:linear-gradient(#000 0,#000 55%,transparent 70%);mask-image:linear-gradient(#000 0,#000 55%,transparent 70%)"></div>
<div class="abs" style="left:243px;top:96px;width:1px;height:321px;background:repeating-linear-gradient(#5e5e5e 0 1px,transparent 1px 2px);-webkit-mask-image:linear-gradient(#000 0,#000 50%,rgba(0,0,0,.35) 75%);mask-image:linear-gradient(#000 0,#000 50%,rgba(0,0,0,.35) 75%)"></div>
<div class="abs" style="left:246.6px;top:96.5px;width:1.1px;height:16px;background:#2fae2f;"></div>
<svg style="left:240.3px;top:120.95px" width="7" height="8" viewBox="0 0 7 8"><g opacity="1"><path d="M0.6 0.6H6.2V4.6L3.4 7.2L0.6 4.6Z" fill="#444" stroke="#8a8a8a" stroke-width="0.9"/><path d="M1.8 3H5" stroke="#8a8a8a" stroke-width="0.9"/></g></svg>
<svg style="left:240.3px;top:139.1px" width="7" height="8" viewBox="0 0 7 8"><g opacity="1"><path d="M0.6 0.6H6.2V4.6L3.4 7.2L0.6 4.6Z" fill="#444" stroke="#8a8a8a" stroke-width="0.9"/><path d="M1.8 3H5" stroke="#8a8a8a" stroke-width="0.9"/></g></svg>
<svg style="left:240.3px;top:320.6px" width="7" height="8" viewBox="0 0 7 8"><g opacity="0.4"><path d="M0.6 0.6H6.2V4.6L3.4 7.2L0.6 4.6Z" fill="#444" stroke="#8a8a8a" stroke-width="0.9"/><path d="M1.8 3H5" stroke="#8a8a8a" stroke-width="0.9"/></g></svg>
<svg style="left:240.3px;top:338.75px" width="7" height="8" viewBox="0 0 7 8"><g opacity="0.4"><path d="M0.6 0.6H6.2V4.6L3.4 7.2L0.6 4.6Z" fill="#444" stroke="#8a8a8a" stroke-width="0.9"/><path d="M1.8 3H5" stroke="#8a8a8a" stroke-width="0.9"/></g></svg>
<svg style="left:240.3px;top:356.9px" width="7" height="8" viewBox="0 0 7 8"><g opacity="0.4"><path d="M0.6 0.6H6.2V4.6L3.4 7.2L0.6 4.6Z" fill="#444" stroke="#8a8a8a" stroke-width="0.9"/><path d="M1.8 3H5" stroke="#8a8a8a" stroke-width="0.9"/></g></svg>
<svg style="left:240.3px;top:375.05px" width="7" height="8" viewBox="0 0 7 8"><g opacity="0.4"><path d="M0.6 0.6H6.2V4.6L3.4 7.2L0.6 4.6Z" fill="#444" stroke="#8a8a8a" stroke-width="0.9"/><path d="M1.8 3H5" stroke="#8a8a8a" stroke-width="0.9"/></g></svg>
<span class="t" style="left:246.8px;top:98.1px;font-size:11px;font-family:'Liberation Mono','Noto Sans CJK SC',monospace;letter-spacing:-0.420px;height:16px;line-height:16px;"><span style="color:#e8bf6a;letter-spacing:-1.000px;">&lt;!doctype </span><span style="color:#f3e3b0;font-weight:bold;letter-spacing:-0.600px;">html</span><span style="color:#e8bf6a;">&gt;</span></span>
<span class="t" style="left:246.8px;top:116.25px;font-size:11px;font-family:'Liberation Mono','Noto Sans CJK SC',monospace;letter-spacing:-0.700px;height:16px;line-height:16px;"><span style="color:#d2b672;">&lt;</span><span style="color:#e8bf6a;font-weight:bold;">html</span><span style="color:#d2b672;">&gt;</span></span>
<span class="t" style="left:246.8px;top:134.4px;font-size:11px;font-family:'Liberation Mono','Noto Sans CJK SC',monospace;letter-spacing:-0.700px;height:16px;line-height:16px;"><span style="color:#d2b672;">&lt;</span><span style="color:#e8bf6a;font-weight:bold;">head</span><span style="color:#d2b672;">&gt;</span></span>
<span class="t" style="left:270.2px;top:152.55px;font-size:11px;font-family:'Liberation Mono','Noto Sans CJK SC',monospace;letter-spacing:-0.420px;height:16px;line-height:16px;"><span style="color:#d2b672;">&lt;</span><span style="color:#e8bf6a;font-weight:bold;">meta </span><span style="color:#ebe6d6;font-weight:bold;">charset=</span><span style="color:#3fae4f;">"utf-8"</span><span style="color:#d2b672;">&gt;</span></span>
<span class="t" style="left:270.2px;top:170.7px;font-size:11px;font-family:'Liberation Mono','Noto Sans CJK SC',monospace;letter-spacing:-0.420px;height:16px;line-height:16px;"><span style="color:#d2b672;">&lt;</span><span style="color:#e8bf6a;font-weight:bold;">meta </span><span style="color:#ebe6d6;font-weight:bold;">name=</span><span style="color:#3fae4f;">"format-detection"</span><span style="color:#ebe6d6;font-weight:bold;"> content=</span><span style="color:#3fae4f;">"telephone=no"</span><span style="color:#e8bf6a;font-weight:bold;"> </span><span style="color:#d2b672;">/&gt;</span></span>
<span class="t" style="left:270.2px;top:188.85px;font-size:11px;font-family:'Liberation Mono','Noto Sans CJK SC',monospace;letter-spacing:-0.620px;height:16px;line-height:16px;"><span style="color:#d2b672;">&lt;</span><span style="color:#e8bf6a;font-weight:bold;">title</span><span style="color:#d2b672;">&gt;</span><span style="color:#b9bcc0;letter-spacing:0.100px;">沟通中</span><span style="color:#d2b672;">&lt;/</span><span style="color:#e8bf6a;font-weight:bold;">title</span><span style="color:#d2b672;">&gt;</span></span>
<span class="t" style="left:270.2px;top:207px;font-size:11px;font-family:'Liberation Mono','Noto Sans CJK SC',monospace;letter-spacing:-0.420px;height:16px;line-height:16px;"><span style="color:#d2b672;">&lt;</span><span style="color:#e8bf6a;font-weight:bold;">link </span><span style="color:#ebe6d6;font-weight:bold;">rel=</span><span style="color:#3fae4f;">"stylesheet"</span><span style="color:#ebe6d6;font-weight:bold;"> type=</span><span style="color:#3fae4f;">"text/css"</span><span style="color:#ebe6d6;font-weight:bold;"> href=</span><span style="color:#3fae4f;">"</span><span style="color:#55b848;background:#6a5110;padding:3px 0 2.4px;">__STATIC__/newcj/css/themes.css</span><span style="color:#3fae4f;">?v=2017129"</span><span style="color:#d2b672;">&gt;</span></span>
<span class="t" style="left:270.2px;top:225.15px;font-size:11px;font-family:'Liberation Mono','Noto Sans CJK SC',monospace;letter-spacing:-0.420px;height:16px;line-height:16px;filter:blur(0.3px);"><span style="color:#d2b672;">&lt;</span><span style="color:#e8bf6a;font-weight:bold;">link </span><span style="color:#ebe6d6;font-weight:bold;">rel=</span><span style="color:#3fae4f;">"stylesheet"</span><span style="color:#ebe6d6;font-weight:bold;"> type=</span><span style="color:#3fae4f;">"text/css"</span><span style="color:#ebe6d6;font-weight:bold;"> href=</span><span style="color:#3fae4f;">"</span><span style="color:#55b848;background:#6a5110;padding:3px 0 2.4px;">__STATIC__/newcj/css/h5app.css</span><span style="color:#3fae4f;">"</span><span style="color:#d2b672;">&gt;</span></span>
<span class="t" style="left:270.2px;top:243.3px;font-size:11px;font-family:'Liberation Mono','Noto Sans CJK SC',monospace;letter-spacing:-0.420px;height:16px;line-height:16px;filter:blur(0.5px);"><span style="color:#d2b672;">&lt;</span><span style="color:#e8bf6a;font-weight:bold;">link </span><span style="color:#ebe6d6;font-weight:bold;">rel=</span><span style="color:#3fae4f;">"stylesheet"</span><span style="color:#ebe6d6;font-weight:bold;"> type=</span><span style="color:#3fae4f;">"text/css"</span><span style="color:#ebe6d6;font-weight:bold;"> href=</span><span style="color:#3fae4f;">"</span><span style="color:#55b848;background:#6a5110;padding:3px 0 2.4px;">__STATIC__/newcj/fonts/iconfont.css</span><span style="color:#3fae4f;">?v=20160707"</span><span style="color:#d2b672;">&gt;</span></span>
<span class="t" style="left:270.2px;top:261.45px;font-size:11px;font-family:'Liberation Mono','Noto Sans CJK SC',monospace;letter-spacing:-0.420px;height:16px;line-height:16px;filter:blur(0.7px);opacity:0.85;"><span style="color:#d2b672;">&lt;</span><span style="color:#e8bf6a;font-weight:bold;">script </span><span style="color:#ebe6d6;font-weight:bold;">src=</span><span style="color:#3fae4f;">"</span><span style="color:#55b848;background:#6a5110;padding:3px 0 2.4px;">__STATIC__/newcj/js/jquery.min.js</span><span style="color:#3fae4f;">"</span><span style="color:#d2b672;">&gt;&lt;/</span><span style="color:#b9bcc0;font-weight:bold;">script</span><span style="color:#d2b672;">&gt;</span></span>
<span class="t" style="left:270.2px;top:279.6px;font-size:11px;font-family:'Liberation Mono','Noto Sans CJK SC',monospace;letter-spacing:-0.420px;height:16px;line-height:16px;filter:blur(0.7px);opacity:0.85;"><span style="color:#d2b672;">&lt;</span><span style="color:#e8bf6a;font-weight:bold;">script </span><span style="color:#ebe6d6;font-weight:bold;">src=</span><span style="color:#3fae4f;">"</span><span style="color:#55b848;background:#6a5110;padding:3px 0 2.4px;">__STATIC__/newcj/js/dist/flexible/flexible_css.debug.js</span><span style="color:#3fae4f;">"</span><span style="color:#d2b672;">&gt;&lt;/</span><span style="color:#b9bcc0;font-weight:bold;">script</span><span style="color:#d2b672;">&gt;</span></span>
<span class="t" style="left:270.2px;top:297.75px;font-size:11px;font-family:'Liberation Mono','Noto Sans CJK SC',monospace;letter-spacing:-0.420px;height:16px;line-height:16px;filter:blur(0.7px);opacity:0.85;"><span style="color:#d2b672;">&lt;</span><span style="color:#e8bf6a;font-weight:bold;">script </span><span style="color:#ebe6d6;font-weight:bold;">src=</span><span style="color:#3fae4f;">"</span><span style="color:#55b848;background:#6a5110;padding:3px 0 2.4px;">__STATIC__/newcj/js/dist/flexible/flexible.debug.js</span><span style="color:#3fae4f;">"</span><span style="color:#d2b672;">&gt;&lt;/</span><span style="color:#b9bcc0;font-weight:bold;">script</span><span style="color:#d2b672;">&gt;</span></span>
<span class="t" style="left:246.8px;top:315.9px;font-size:11px;font-family:'Liberation Mono','Noto Sans CJK SC',monospace;letter-spacing:-0.670px;height:16px;line-height:16px;filter:blur(0.7px);opacity:0.8;"><span style="color:#7f775e;">&lt;/</span><span style="color:#e8bf6a;font-weight:bold;">head</span><span style="color:#7f775e;">&gt;</span></span>
<span class="t" style="left:246.8px;top:334.05px;font-size:11px;font-family:'Liberation Mono','Noto Sans CJK SC',monospace;letter-spacing:-0.600px;height:16px;line-height:16px;filter:blur(0.4px);"><span style="color:#7f775e;">&lt;</span><span style="color:#e8bf6a;font-weight:bold;">body </span><span style="color:#f6e7b4;font-weight:bold;background:#7f5a06;padding:3px 0 2.4px;letter-spacing:-0.310px;">ontouchstart</span><span style="color:#7f775e;">&gt;</span></span>
<span class="t" style="left:246.8px;top:352.2px;font-size:11px;font-family:'Liberation Mono','Noto Sans CJK SC',monospace;letter-spacing:-0.670px;height:16px;line-height:16px;filter:blur(0.55px);opacity:0.88;"><span style="color:#7f775e;">&lt;</span><span style="color:#e8bf6a;font-weight:bold;">div </span><span style="color:#ebe6d6;font-weight:bold;">class=</span><span style="color:#35934d;">"full-page-group"</span><span style="color:#7f775e;">&gt;</span></span>
<span class="t" style="left:246.8px;top:370.35px;font-size:11px;font-family:'Liberation Mono','Noto Sans CJK SC',monospace;letter-spacing:-0.670px;height:16px;line-height:16px;filter:blur(0.55px);opacity:0.88;"><span style="color:#7f775e;">&lt;</span><span style="color:#e8bf6a;font-weight:bold;">div </span><span style="color:#ebe6d6;font-weight:bold;">class=</span><span style="color:#35934d;">"full-page chatDetail-page"</span><span style="color:#7f775e;">&gt;</span></span>
<span class="t" style="left:270.2px;top:388.5px;font-size:11px;font-family:'Liberation Mono','Noto Sans CJK SC',monospace;letter-spacing:-0.670px;height:16px;line-height:16px;filter:blur(0.6px);opacity:0.85;"><span style="color:#7f775e;">&lt;</span><span style="color:#e8bf6a;font-weight:bold;">div </span><span style="color:#ebe6d6;font-weight:bold;">class=</span><span style="color:#35934d;">"chat-header flex"</span><span style="color:#7f775e;">&gt;</span></span>
<span class="t" style="left:293.6px;top:406.65px;font-size:11px;font-family:'Liberation Mono','Noto Sans CJK SC',monospace;letter-spacing:-0.670px;height:16px;line-height:16px;filter:blur(0.65px);opacity:0.8;"><span style="color:#7f775e;">&lt;</span><span style="color:#e8bf6a;font-weight:bold;">i </span><span style="color:#ebe6d6;font-weight:bold;">class=</span><span style="color:#35934d;">"icon icon-toleft t-48"</span><span style="color:#7f775e;">&gt;&lt;/</span><span style="color:#e8bf6a;font-weight:bold;">i</span><span style="color:#7f775e;">&gt;</span></span>
<span class="t" style="left:293.6px;top:424.8px;font-size:11px;font-family:'Liberation Mono','Noto Sans CJK SC',monospace;letter-spacing:-0.670px;height:16px;line-height:16px;filter:blur(0.65px);opacity:0.8;"><span style="color:#7f775e;">&lt;</span><span style="color:#e8bf6a;font-weight:bold;">span </span><span style="color:#ebe6d6;font-weight:bold;">class=</span><span style="color:#35934d;">"show-title t-30"</span><span style="color:#7f775e;">&gt;</span><span style="color:#b9bcc0;">商店</span><span style="color:#7f775e;">&lt;/</span><span style="color:#e8bf6a;font-weight:bold;">span</span><span style="color:#7f775e;">&gt;</span></span>
<div class="abs" style="left:212.5px;top:434px;width:635.8px;height:7.5px;background:#414345;"></div>
<div class="abs" style="left:247px;top:434.8px;width:558px;height:5.8px;background:#585a5c;border-radius:2px;filter:blur(0.8px)"></div>
<div class="abs" style="left:844.3px;top:139.6px;width:4.3px;height:1.6px;background:#e2e21a;border-radius:1px"></div>
<div class="abs" style="left:844.3px;top:145.6px;width:4.3px;height:1.6px;background:#e2e21a;border-radius:1px"></div>
<div class="abs" style="left:844.3px;top:151.6px;width:4.3px;height:1.6px;background:#e2e21a;border-radius:1px"></div>
<div class="abs" style="left:844.3px;top:157.6px;width:4.3px;height:1.6px;background:#e2e21a;border-radius:1px"></div>
<div class="abs" style="left:844.3px;top:163.6px;width:4.3px;height:1.6px;background:#e2e21a;border-radius:1px"></div>
<div class="abs" style="left:844.3px;top:169.6px;width:4.3px;height:1.6px;background:#e2e21a;border-radius:1px"></div>
<div class="abs" style="left:844.3px;top:181.6px;width:4.3px;height:1.6px;background:#e2e21a;border-radius:1px"></div>
<div class="abs" style="left:844.3px;top:346px;width:5px;height:2px;background:#d8d810;border-radius:1px"></div>
<div class="abs" style="left:848.3px;top:110px;width:4.7px;height:102px;background:#5e5f60;"></div>
<div class="abs" style="left:540.5px;top:54.5px;width:311.5px;height:54.5px;background:#595a5b;border:1px solid #626364;box-shadow:0 1.5px 2px rgba(0,0,0,.45)"></div>
<svg style="left:545.5px;top:57.5px" width="13" height="13" viewBox="0 0 13 13"><circle cx="6.5" cy="6.5" r="6.2" fill="#4d9fe6" stroke="#b7dcff" stroke-width="0.8"/><path d="M6.5 2.8V7.4" stroke="#fff" stroke-width="2" stroke-linecap="round"/><circle cx="6.5" cy="10" r="1.1" fill="#fff"/></svg>
<span class="t " id="t69" style="left:563.5px;top:55.5px;height:15px;line-height:15px;font-size:10px;color:#d6d6d6;font-family:'Liberation Sans','Noto Sans CJK SC',sans-serif;font-weight:bold;letter-spacing:0.239px;">Help improve PhpStorm by sending anonymous usage</span>
<span class="t " id="t70" style="left:563.5px;top:67.9px;height:15px;line-height:15px;font-size:10px;color:#d6d6d6;font-family:'Liberation Sans','Noto Sans CJK SC',sans-serif;font-weight:bold;letter-spacing:0.265px;">statistics to JetBrains s.r.o.</span>
<span class="t " id="t71" style="left:563.5px;top:80.5px;height:15px;line-height:15px;font-size:10px;color:#bcbcbc;font-family:'Liberation Sans','Noto Sans CJK SC',sans-serif;letter-spacing:-0.015px;">Please click <span style="color:#5b9fe8;text-decoration:underline">I agree</span> if you want to help make PhpStorm better</span>
<span class="t " id="t72" style="left:563.5px;top:93px;height:15px;line-height:15px;font-size:10px;color:#bcbcbc;font-family:'Liberation Sans','Noto Sans CJK SC',sans-serif;letter-spacing:0.108px;">or <span style="color:#5b9fe8;text-decoration:underline">I don't agree</span> otherwise. <span style="color:#5b9fe8;text-decoration:underline">more...</span></span>
<span class="t " id="t73" style="left:714px;top:441.875px;height:14.25px;line-height:14.25px;font-size:9.5px;color:#b0b2b4;font-family:'Liberation Sans','Noto Sans CJK SC',sans-serif;letter-spacing:0.094px;">1:8</span>
<span class="t " id="t74" style="left:736px;top:441.875px;height:14.25px;line-height:14.25px;font-size:9.5px;color:#8f9193;font-family:'Liberation Sans','Noto Sans CJK SC',sans-serif;letter-spacing:-0.791px;filter:blur(0.5px);">CRLF:</span>
<span class="t " id="t75" style="left:771.5px;top:441.325px;height:15.75px;line-height:15.75px;font-size:10.5px;color:#b8babc;font-family:'Liberation Sans','Noto Sans CJK SC',sans-serif;letter-spacing:-0.050px;">UTF-8</span>
<span class="t " id="t76" style="left:803.5px;top:441.5px;height:15px;line-height:15px;font-size:10px;color:#b8babc;font-family:'Liberation Sans','Noto Sans CJK SC',sans-serif;font-weight:bold;letter-spacing:-0.344px;">:</span>
<svg style="left:814px;top:445.3px" width="8" height="9" viewBox="0 0 8 9"><rect x="1.6" y="4" width="5.6" height="4.2" fill="none" stroke="#96989a" stroke-width="1.2"/><path d="M1.2 4V2.8A1.8 1.8 0 0 1 4.6 2.4" fill="none" stroke="#a8aaac" stroke-width="1.1"/></svg>
<svg style="left:828px;top:443.8px" width="8" height="11" viewBox="0 0 8 11"><ellipse cx="4" cy="4" rx="2.8" ry="3.6" fill="none" stroke="#7d7f81" stroke-width="1.1"/><path d="M0.8 10.5C1 8 2.4 7.8 4 7.8S7 8 7.2 10.5" fill="none" stroke="#7d7f81" stroke-width="1.1"/></svg>
<svg style="left:842px;top:445px" width="9" height="8" viewBox="0 0 9 8"><path d="M0 0H9V5.6H3.6L1.6 7.6V5.6H0Z" fill="#595c5e"/></svg>
<div class="abs" style="left:0px;top:455.5px;width:854px;height:22.5px;background:linear-gradient(90deg,#a3bbdc 0,#a8bfdf 70%,#9bb3d4 76%,#7b93b5 80.5%,#7e96b7 90%,#8199ba 100%);border-top:1px solid #c6d6ea"></div>
<div class="abs" style="left:0px;top:456.5px;width:36px;height:21.5px;background:linear-gradient(90deg,#91a9cb,#a6bddd);"></div>
<div class="abs" style="left:37.5px;top:456.5px;width:36.5px;height:21.5px;background:linear-gradient(#d4e0f1,#bccde4 45%,#adc1dc);border:1px solid #8095b4;border-top-color:#e6eef8;border-radius:2px"></div>
<div class="abs" style="left:76.5px;top:456.5px;width:36px;height:21.5px;background:linear-gradient(#d4e0f1,#bccde4 45%,#adc1dc);border:1px solid #8095b4;border-top-color:#e6eef8;border-radius:2px"></div>
<div class="abs" style="left:115px;top:456.5px;width:36.5px;height:21.5px;background:linear-gradient(#d4e0f1,#bccde4 45%,#adc1dc);border:1px solid #8095b4;border-top-color:#e6eef8;border-radius:2px"></div>
<div class="abs" style="left:154px;top:456.5px;width:34.5px;height:21.5px;background:linear-gradient(#d4e0f1,#bccde4 45%,#adc1dc);border:1px solid #8095b4;border-top-color:#e6eef8;border-radius:2px"></div>
<div class="abs" style="left:190px;top:457px;width:1px;height:21px;background:#8298b8;"></div>
<svg style="left:6px;top:456.8px" width="21" height="21" viewBox="0 0 21 21"><defs><radialGradient id="og" cx="50%" cy="35%" r="65%"><stop offset="0" stop-color="#6fc3f2"/><stop offset=".6" stop-color="#1b66b4"/><stop offset="1" stop-color="#0b2f6a"/></radialGradient></defs><circle cx="10.5" cy="10.5" r="10.2" fill="url(#og)" stroke="#3d5d8c" stroke-width=".6"/><path d="M6 6.2Q8 5 10 6V10Q8 9 6 10.2Z" fill="#e8502c"/><path d="M11 6.2Q13 7.2 15 6V10Q13 11 11 10Z" fill="#7ec13c"/><path d="M6 11.2Q8 10 10 11V15Q8 14 6 15.2Z" fill="#3f9be8"/><path d="M11 11.2Q13 12.2 15 11V15Q13 16 11 15Z" fill="#f5c32c"/></svg>
<svg style="left:47px;top:458.5px" width="18" height="18" viewBox="0 0 18 18"><circle cx="9" cy="9" r="8.6" fill="#1b1b1d"/><g fill="none" stroke="#d8d8d8" stroke-width="1.5"><path d="M9 9C7 5 9 2.4 11.5 2.2"/><path d="M9 9C13.4 8.6 14.8 11.4 13.6 13.8"/><path d="M9 9C6.6 12.8 3.6 12 2.6 9.8"/></g></svg>
<svg style="left:85.5px;top:458px" width="19" height="19" viewBox="0 0 19 19"><circle cx="9.5" cy="10" r="8" fill="#52b82e"/><path d="M5 10.5H13.6C13.4 7.6 11.8 6.2 9.6 6.2C7 6.2 5.4 8 5.4 10.6C5.4 13 7.2 14.4 9.6 14.4C11.2 14.4 12.4 13.8 13.2 12.8" fill="none" stroke="#f3fff0" stroke-width="2"/><path d="M3 6.5C6 1.5 13 0.5 16.5 2.5" fill="none" stroke="#57bb33" stroke-width="1.4"/></svg>
<svg style="left:123px;top:458px" width="20" height="19" viewBox="0 0 20 19"><rect x="0" y="8" width="10.6" height="9" fill="#4640c0"/><path d="M1.6 15.4v-5M1.6 10.6h1.8v2.2H1.6M5 15.4v-5M5 12.2h1.8v3.2M8.6 15.4v-5M8.6 10.6h1.4v2.2H8.6" stroke="#dfe0ff" stroke-width="1" fill="none"/><path d="M16 0.2C8.6 2.8 8.4 7.4 12.2 10C15.4 12.2 14.6 15.6 9.8 18.6C17.6 18.6 20.8 13.6 17.2 9.8C14.4 6.6 13.8 3.4 16 0.2Z" fill="#f2811a"/></svg>
<svg style="left:160px;top:459px" width="21" height="18" viewBox="0 0 21 18"><path d="M1 2.4H7L8.4 4H19.4V16H1Z" fill="#f6dc86" stroke="#c9a648" stroke-width=".8"/><path d="M1.6 6H19" stroke="#fff4c4" stroke-width="1"/><circle cx="3.2" cy="1.6" r="1" fill="#4caf50"/><circle cx="8" cy="1.6" r="1" fill="#e0533a"/><circle cx="12.4" cy="1.6" r="1" fill="#e0a030"/><rect x="5" y="10" width="11" height="7" fill="#5aa6e4" stroke="#2f6fb0" stroke-width=".7"/><rect x="7" y="13" width="7" height="3" fill="#cfe6fa"/></svg>
<svg style="left:686px;top:462.5px" width="9" height="8" viewBox="0 0 9 8"><rect x="0" y="1.6" width="9" height="5.4" rx="1" fill="#b9b9b0" stroke="#8e8e86" stroke-width=".5"/><path d="M1.4 3.4h6M1.4 5h6" stroke="#8a8a80" stroke-width=".7"/></svg>
<svg style="left:698px;top:461.5px" width="10" height="10" viewBox="0 0 10 10"><circle cx="5" cy="5" r="4.8" fill="#1f2fb0" stroke="#8aa0ff" stroke-width=".5"/><path d="M3.6 3.8C3.6 2 6.6 2 6.6 3.8C6.6 5 5 5 5 6.2" fill="none" stroke="#fff" stroke-width="1.2"/><circle cx="5" cy="7.8" r=".7" fill="#fff"/></svg>
<svg style="left:713px;top:460px" width="7" height="12" viewBox="0 0 7 12"><path d="M1.4 3.4L5.2 0.8" stroke="#e6ecf6" stroke-width="1.8" stroke-linecap="round"/><path d="M1.6 8.2H5L3.3 10.2Z" fill="#e6ecf6"/></svg>
<svg style="left:725px;top:466px" width="5" height="4" viewBox="0 0 5 4"><path d="M0 3.4H5L2.5 0Z" fill="#eef3fa"/></svg>
<svg style="left:737px;top:461.5px" width="11" height="10" viewBox="0 0 11 10"><path d="M0.6 3.4H2.6L5 1V9L2.6 6.6H0.6Z" fill="#f2f5fa"/><path d="M6.4 3A3 3 0 0 1 6.4 7M8 1.4A5 5 0 0 1 8 8.6" fill="none" stroke="#f2f5fa" stroke-width="1"/></svg>
<svg style="left:752.5px;top:461.5px" width="10" height="10" viewBox="0 0 10 10"><circle cx="5" cy="5" r="4.8" fill="#58c232"/><path d="M2.6 5.4H7.2C7 3.8 6.2 3.2 5 3.2C3.6 3.2 2.8 4.2 2.8 5.4C2.8 6.6 3.8 7.4 5 7.4C5.8 7.4 6.6 7 7 6.4" fill="none" stroke="#eaffe2" stroke-width="1.1"/></svg>
<svg style="left:767px;top:460.5px" width="11" height="11" viewBox="0 0 11 11"><path d="M1.4 0.6V10.6" stroke="#f4f6fa" stroke-width="1.3"/><path d="M2.2 1.2H6L6.6 2.2H9.8L8.6 4L9.8 5.8H6.6L6 4.8H2.2Z" fill="#f4f6fa"/></svg>
<svg style="left:782px;top:462px" width="11" height="9" viewBox="0 0 11 9"><path d="M0 9L10.6 0V9Z" fill="#dfe6f0" opacity=".55"/><path d="M1.6 9V7.4M4 9V5.6M6.4 9V3.8M8.8 9V1.8" stroke="#f6f8fb" stroke-width="1.3"/></svg>
<span class="t " id="t77" style="left:811.5px;top:456.3px;height:12px;line-height:12px;font-size:8px;color:#fff;font-family:'Liberation Sans','Noto Sans CJK SC',sans-serif;letter-spacing:-0.106px;">21:38</span>
<span class="t " id="t78" style="left:804.5px;top:467.5px;height:12px;line-height:12px;font-size:8px;color:#fff;font-family:'Liberation Sans','Noto Sans CJK SC',sans-serif;letter-spacing:0.170px;">2018/2/5</span>
<div class="abs" style="left:844.5px;top:456.5px;width:9.5px;height:21.5px;background:linear-gradient(90deg,#7388a6,#8197b6 50%,#6e84a2);border-left:1px solid #5d7290"></div>
<div class="abs" style="left:0px;top:478px;width:854px;height:2px;background:#1f2123;"></div>
<div class="abs" style="left:131px;top:478px;width:99px;height:2px;background:#5a5d60;"></div>
<div class="abs" style="left:0px;top:478px;width:131px;height:2px;background:#19a94b;"></div>
    </div></div>
<svg style="left:461px;top:212px" width="56" height="56" viewBox="0 0 56 56"><circle cx="28" cy="28" r="21.4" fill="none" stroke="rgba(40,50,72,.66)" stroke-width="6.7"/><path d="M12.9 43.1A21.4 21.4 0 0 1 43.1 12.9" fill="none" stroke="rgba(140,163,200,.64)" stroke-width="6.7"/></svg>
<span class="t " id="t88" style="left:844.4px;top:377px;height:14.4px;line-height:14.4px;font-size:9.6px;color:#707070;font-family:'Liberation Sans','Noto Sans CJK SC',sans-serif;font-weight:bold;letter-spacing:-0.111px;">16101749</span>
<svg style="left:824px;top:381px" width="32" height="32" viewBox="0 0 32 32"><defs><linearGradient id="bg2" x1="0" y1="0" x2="0" y2="1"><stop offset="0" stop-color="#3588ec"/><stop offset=".45" stop-color="#469fee"/><stop offset="1" stop-color="#7fd2f0"/></linearGradient></defs><circle cx="16" cy="16" r="14.6" fill="url(#bg2)" stroke="#f6f6ec" stroke-width="1.9"/></svg>
<span class="t " id="t87" style="left:829px;top:390.925px;height:12.75px;line-height:12.75px;font-size:8.5px;color:#e2f1ff;font-family:'Liberation Sans','Noto Sans CJK SC',sans-serif;font-weight:bold;letter-spacing:0.330px;">02:27</span>
  </div>
</div>
<div id="split"></div>
<div id="dev">
  <div class="ln" style="top:-4px">Service worker active</div>
  <div class="ln" style="left:360.7px;top:-4px;text-decoration:underline;color:#545454">boot.js?t=1557717500082:1</div>
  <div class="hr" style="top:12px"></div>
  <svg style="left:9px;top:18.8px" width="7" height="8" viewBox="0 0 7 8"><path d="M1 0.8L5.2 4L1 7.2" fill="none" stroke="#8e8e8e" stroke-width="1.4"/></svg>
  <div class="ln" style="top:16px">videojs.getPlayers(<span class="s">"video-player"</span>).html5player.tech_.setPlaybackRate(<span class="n">2</span>)</div>
  <svg style="left:9px;top:38.3px" width="8" height="8" viewBox="0 0 8 8"><path d="M4.4 0.8L0.8 4L4.4 7.2" fill="none" stroke="#bdbdbd" stroke-width="1.3"/><circle cx="6" cy="4" r=".9" fill="#bdbdbd"/></svg>
  <div class="ln u" style="top:35px">undefined</div>
  <div class="hr" style="top:51px"></div>
  <svg style="left:9px;top:57.8px" width="7" height="8" viewBox="0 0 7 8"><path d="M1 0.8L5.2 4L1 7.2" fill="none" stroke="#8e8e8e" stroke-width="1.4"/></svg>
  <div class="ln" style="top:55px">videojs.getPlayers(<span class="s">"video-player"</span>).html5player.tech_.setPlaybackRate(<span class="n">10</span>)</div>
  <svg style="left:9px;top:77.3px" width="8" height="8" viewBox="0 0 8 8"><path d="M4.4 0.8L0.8 4L4.4 7.2" fill="none" stroke="#bdbdbd" stroke-width="1.3"/><circle cx="6" cy="4" r=".9" fill="#bdbdbd"/></svg>
  <div class="ln u" style="top:74px">undefined</div>
  <div class="hr" style="top:89px"></div>
  <svg style="left:9px;top:96px" width="7" height="8" viewBox="0 0 7 8"><path d="M1 0.8L5.2 4L1 7.2" fill="none" stroke="#3b78e7" stroke-width="1.6"/></svg>
  <div class="abs" style="left:24px;top:93px;width:1px;height:14px;background:#000"></div>
</div>
</body>
</html>
